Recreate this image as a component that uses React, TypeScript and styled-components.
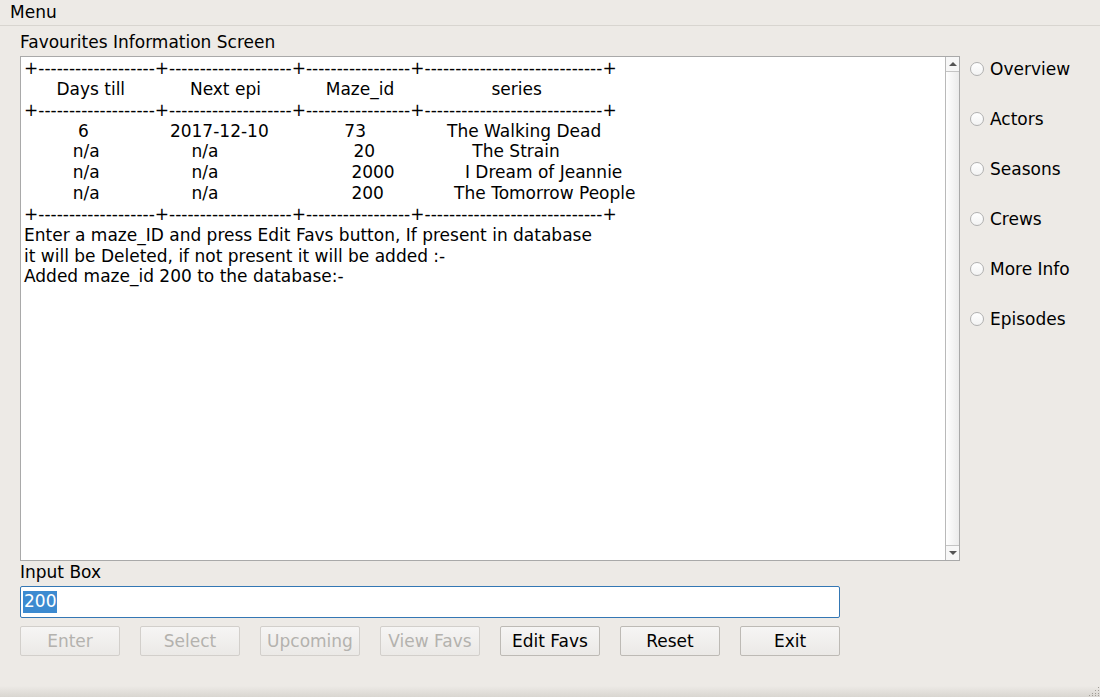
import React from "react";
import styled, { createGlobalStyle } from "styled-components";

const Global = createGlobalStyle`
  html, body { margin: 0; padding: 0; background: #edeae6; }
  body { font-family: "DejaVu Sans", "Liberation Sans", sans-serif; font-size: 17px; color: #000; }
  * { box-sizing: border-box; }
`;

const Window = styled.div`
  width: 1100px;
  height: 697px;
  display: flex;
  flex-direction: column;
  background: #edeae6;
  overflow: hidden;
`;

const MenuBar = styled.div`
  height: 26px;
  padding: 0 0 0 10px;
  line-height: 24px;
  border-bottom: 1px solid #d8d5d0;
  flex: none;
`;

const Body = styled.div`
  flex: 1;
  display: grid;
  grid-template-columns: 940px 1fr;
  column-gap: 10px;
  padding: 0 0 0 20px;
`;

const LeftCol = styled.div`
  display: flex;
  flex-direction: column;
`;

const FieldLabel = styled.div<{ $top: number; $bottom: number }>`
  line-height: 21px;
  padding-top: ${(p) => p.$top}px;
  margin-bottom: ${(p) => p.$bottom}px;
`;

const TextArea = styled.div`
  height: 505px;
  border: 1px solid #a9a9a9;
  background: #fff;
  display: flex;
`;

const TextContent = styled.pre`
  flex: 1;
  margin: 0;
  padding: 1px 0 0 3px;
  font-family: "DejaVu Sans", sans-serif;
  font-size: 17px;
  line-height: 20.85px;
  white-space: pre;
  overflow: hidden;
`;

const Scrollbar = styled.div`
  width: 14px;
  border-left: 1px solid #b9b9b9;
  display: flex;
  flex-direction: column;
`;

const ScrollArrow = styled.div<{ $down?: boolean }>`
  height: 15px;
  flex: none;
  display: flex;
  align-items: center;
  justify-content: center;
  background: #f7f7f7;
  border-${(p) => (p.$down ? "top" : "bottom")}: 1px solid #c4c4c4;
  &::after {
    content: "";
    width: 0;
    height: 0;
    border-left: 4px solid transparent;
    border-right: 4px solid transparent;
    ${(p) => (p.$down ? "border-top: 4px solid #555;" : "border-bottom: 4px solid #555;")}
  }
`;

const ScrollThumb = styled.div`
  flex: 1;
  background: linear-gradient(to right, #ffffff, #ebebeb);
`;

const Entry = styled.div`
  width: 820px;
  height: 32px;
  border: 1px solid #3477b4;
  border-radius: 2px;
  background: #fff;
  padding: 4px 0 0 2px;
  line-height: 21px;
`;

const Selected = styled.span`
  background: #3c8ad0;
  color: #fff;
  display: inline-block;
  height: 22px;
  padding: 0 1px;
`;

const ButtonRow = styled.div`
  display: flex;
  gap: 20px;
  margin-top: 8px;
`;

const Button = styled.button<{ $disabled?: boolean }>`
  width: 100px;
  height: 30px;
  padding: 0;
  border: 1px solid #bdbab5;
  border-radius: 2px;
  background: linear-gradient(to bottom, #f6f5f4, #ebe9e6);
  font-family: "DejaVu Sans", sans-serif;
  font-size: 17px;
  color: ${(p) => (p.$disabled ? "#b4b2ae" : "#000")};
  ${(p) => (p.$disabled ? "border-color: #d2cfcb;" : "")}
`;

const RightCol = styled.div`
  display: flex;
  flex-direction: column;
  gap: 26px;
  padding-top: 31px;
`;

const RadioItem = styled.label`
  display: flex;
  align-items: center;
  height: 24px;
  gap: 6px;
`;

const RadioCircle = styled.span`
  width: 14px;
  height: 14px;
  border-radius: 50%;
  border: 1px solid #b0b0b0;
  background: linear-gradient(to bottom, #ffffff, #f3f3f3);
  flex: none;
`;

const StatusBar = styled.div`
  height: 11px;
  flex: none;
  background: linear-gradient(to bottom, #edeae6, #d9d6d1);
  display: flex;
  justify-content: flex-end;
  align-items: flex-end;
`;

const Grip = styled.svg`
  width: 10px;
  height: 10px;
  margin: 0 1px 1px 0;
`;

const hr = "+" + "-".repeat(19) + "+" + "-".repeat(20) + "+" + "-".repeat(17) + "+" + "-".repeat(29) + "+";
const sp = (n: number) => " ".repeat(n);
const thin = "\u2009";

const lines = [
  hr,
  sp(6) + "Days till" + sp(12) + "Next epi" + sp(12) + "Maze_id" + sp(18) + "series" + sp(12),
  hr,
  sp(10) + "6" + sp(15) + "2017-12-10" + sp(14) + "73" + sp(15) + "The Walking Dead",
  sp(9) + "n/a" + sp(17) + "n/a" + sp(25) + "20" + sp(18) + "The Strain",
  sp(9) + "n/a" + sp(17) + "n/a" + sp(24) + thin + "2000" + sp(13) + "I Dream of Jeannie",
  sp(9) + "n/a" + sp(17) + "n/a" + sp(24) + thin + "200" + sp(13) + "The Tomorrow People",
  hr,
  "Enter a maze_ID and press Edit Favs button, If present in database",
  "it will be Deleted, if not present it will be added :-",
  "Added maze_id 200 to the database:-",
];

const radios = ["Overview", "Actors", "Seasons", "Crews", "More Info", "Episodes"];
const buttons: [string, boolean][] = [
  ["Enter", true],
  ["Select", true],
  ["Upcoming", true],
  ["View Favs", true],
  ["Edit Favs", false],
  ["Reset", false],
  ["Exit", false],
];

export default function App() {
  return (
    <Window>
      <Global />
      <MenuBar>Menu</MenuBar>
      <Body>
        <LeftCol>
          <FieldLabel $top={6} $bottom={3}>Favourites Information Screen</FieldLabel>
          <TextArea>
            <TextContent>{lines.join("\n")}</TextContent>
            <Scrollbar>
              <ScrollArrow />
              <ScrollThumb />
              <ScrollArrow $down />
            </Scrollbar>
          </TextArea>
          <FieldLabel $top={1} $bottom={3}>Input Box</FieldLabel>
          <Entry>
            <Selected>200</Selected>
          </Entry>
          <ButtonRow>
            {buttons.map(([t, d]) => (
              <Button key={t} $disabled={d}>{t}</Button>
            ))}
          </ButtonRow>
        </LeftCol>
        <RightCol>
          {radios.map((r) => (
            <RadioItem key={r}>
              <RadioCircle />
              {r}
            </RadioItem>
          ))}
        </RightCol>
      </Body>
      <StatusBar>
        <Grip viewBox="0 0 10 10">
          {[
            [9, 1], [9, 4], [6, 4], [9, 7], [6, 7], [3, 7], [9, 9], [6, 9], [3, 9], [0, 9],
          ].map(([x, y], i) => (
            <rect key={i} x={x} y={y} width="1" height="1" fill="#a09c96" />
          ))}
        </Grip>
      </StatusBar>
    </Window>
  );
}
